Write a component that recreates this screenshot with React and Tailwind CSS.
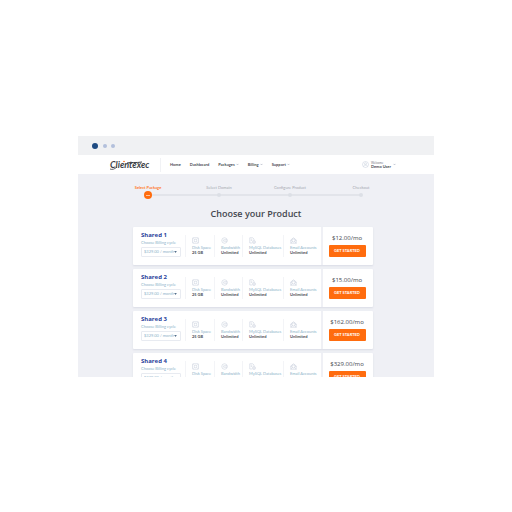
import { ChevronDown } from "lucide-react";

const links = [
  { label: "Home" },
  { label: "Dashboard" },
  { label: "Packages", menu: true },
  { label: "Billing", menu: true },
  { label: "Support", menu: true },
];

const steps = ["Select Package", "Select Domain", "Configure Product", "Checkout"];

const products = [
  { name: "Shared 1", price: "$12.00/mo" },
  { name: "Shared 2", price: "$15.00/mo" },
  { name: "Shared 3", price: "$162.00/mo" },
  { name: "Shared 4", price: "$329.00/mo" },
];

const features = [
  { icon: "disk", label: "Disk Space", value: "25 GB" },
  { icon: "gauge", label: "Bandwidth", value: "Unlimited" },
  { icon: "database", label: "MySQL Databases", value: "Unlimited" },
  { icon: "mail", label: "Email Accounts", value: "Unlimited" },
];

const FeatureIcon = ({ name }) => (
  <svg viewBox="0 0 28 28" className="h-[7px] w-[7px]" fill="none" stroke="#c3cad9" strokeWidth="2">
    {name === "disk" && (
      <>
        <rect x="2" y="3" width="24" height="22" rx="2" />
        <circle cx="14" cy="14" r="5" />
        <path d="M5 6l5 4M23 6l-5 4M5 22l5-4M23 22l-5-4" />
      </>
    )}
    {name === "gauge" && (
      <>
        <circle cx="14" cy="14" r="11" />
        <path d="M12 11h13M12 17h13M12 11a3 3 0 1 0 0 6" />
      </>
    )}
    {name === "database" && (
      <>
        <path d="M13 24H3V3h12l5 5v5M7 9h6M7 14h6" />
        <circle cx="20" cy="20" r="6" />
        <circle cx="20" cy="20" r="2" />
      </>
    )}
    {name === "mail" && (
      <>
        <path d="M3 12v13h22V12L14 3z" />
        <path d="M3 13l11 7 11-7M8 15V8h12v7M3 25l8-7M25 25l-8-7" />
      </>
    )}
  </svg>
);

const Logo = () => (
  <a href="#" className="relative block w-10 text-[9px] leading-[12px] font-bold italic text-[#3c3f46]">
    Clientexec
    <svg viewBox="0 0 40 12" className="absolute inset-0 h-3 w-10" fill="none">
      <path d="M17 4c4-1 9 0 15-1" stroke="#3c3f46" strokeWidth="1" />
      <path d="M0 10c2 1 5 0 7-2" stroke="#3c3f46" strokeWidth="0.8" />
      <circle cx="14" cy="2.5" r="0.8" fill="#ff6c0e" />
    </svg>
  </a>
);

const Header = () => (
  <header className="flex h-[19px] items-center bg-white pr-[38px] pl-8">
    <Logo />
    <nav className="ml-[10px] flex items-center gap-[9px] border-l border-[#f1f2f5] py-1 pl-[9px] text-[4px] leading-[6px] font-bold text-[#4a4d55]">
      {links.map((link) => (
        <a key={link.label} href="#" className="flex items-center gap-px">
          {link.label}
          {link.menu && <ChevronDown strokeWidth={4} className="h-[3px] w-[3px] text-[#8b94a8]" />}
        </a>
      ))}
    </nav>
    <button className="ml-auto flex items-center gap-[2px] text-left">
      <svg viewBox="0 0 28 28" className="h-[7px] w-[7px]" fill="none" stroke="#c3cad9" strokeWidth="2">
        <circle cx="14" cy="14" r="12" />
        <circle cx="14" cy="11" r="4" />
        <path d="M6 22c2-8 14-8 16 0" />
      </svg>
      <span className="block text-[#4a4d55]">
        <span className="block text-[3px] leading-[4px] text-[#777b85]">Welcome</span>
        <span className="block text-[4px] leading-[4px] font-bold">Demo User</span>
      </span>
      <ChevronDown strokeWidth={4} className="h-[3px] w-[3px] text-[#8b94a8]" />
    </button>
  </header>
);

const Stepper = () => (
  <div className="pr-3 pl-[15px]">
    <ol className="flex justify-between text-[4px] leading-[6px] text-[#a5a8b1]">
      {steps.map((step, i) => (
        <li key={step} className="flex w-0 justify-center whitespace-nowrap">
          <span className={i === 0 ? "font-bold text-[#ff7d2b]" : ""}>{step}</span>
        </li>
      ))}
    </ol>
    <div className="mt-[3px] flex h-[2px] items-center justify-between bg-[#e2e4ea]">
      {steps.map((step, i) => (
        <span key={step} className="flex w-0 justify-center">
          {i === 0 ? (
            <span className="flex h-2 w-2 shrink-0 items-center justify-center rounded-full bg-[#ff6c0e]">
              <span className="h-px w-1 bg-[#ffc39c]" />
            </span>
          ) : (
            <span className="h-1 w-1 shrink-0 rounded-full bg-[#dcdfe6]" />
          )}
        </span>
      ))}
    </div>
  </div>
);

const ProductCard = ({ product }) => {
  const id = product.name.toLowerCase().replace(" ", "-");

  return (
    <article className="grid h-[38px] grid-cols-[52fr_29fr_28fr_41fr_38fr_52fr] rounded-[1px] bg-white whitespace-nowrap shadow-[0_1px_2px_#d9dce5]">
      <div className="min-w-0 pt-1 pl-2">
        <h2 className="font-['Open_Sans',sans-serif] text-[6px] leading-[8px] font-bold text-[#2a3f9b]">{product.name}</h2>
        <label htmlFor={id} className="block text-[4px] leading-[7px] text-[#8db3c9]">
          Choose Billing cycle
        </label>
        <div className="mt-px flex h-[10px] w-10 items-center rounded-[1px] border border-[#e8ebf1] pr-[3px] pl-[2px]">
          <select id={id} className="min-w-0 flex-1 appearance-none bg-transparent text-[4px] leading-[6px] text-[#8db3c9] outline-none">
            <option>$329.00 / month</option>
          </select>
          <svg viewBox="0 0 4 3" className="h-[2px] w-[3px] shrink-0" fill="#55708c">
            <path d="M0 0h4L2 3z" />
          </svg>
        </div>
      </div>
      {features.map((feature) => (
        <div key={feature.label} className="my-2 min-w-0 border-l border-[#f3f4f7] pt-[2px] pl-[6px] text-[4px] leading-[5px]">
          <FeatureIcon name={feature.icon} />
          <p className="mt-px text-[#8db3c9]">{feature.label}</p>
          <p className="font-bold text-[#4a4d55]">{feature.value}</p>
        </div>
      ))}
      <div className="flex min-w-0 flex-col items-center border-l-2 border-[#eff0f5] pt-[7px] pr-[2px]">
        <p className="font-['Open_Sans',sans-serif] text-[6px] leading-[8px] text-[#44474f]">{product.price}</p>
        <button className="mt-[3px] h-3 w-[37px] rounded-[1px] bg-[#ff6c0e] text-[4px] leading-[4px] font-bold text-white">
          GET STARTED
        </button>
      </div>
    </article>
  );
};

const App = () => {
  return (
    <div className="min-h-screen bg-white px-[78px] pt-[136px] font-['Lato','Open_Sans',sans-serif]">
      <div className="aspect-[356/241] w-full overflow-hidden bg-[#eff0f5]">
        <div className="flex h-[19px] items-center gap-1 bg-[#f0f1f3] pl-[14px]">
          <span className="mr-px h-[6px] w-[6px] rounded-full bg-[#1e4b82]" />
          <span className="h-1 w-1 rounded-full bg-[#b3c0dc]" />
          <span className="h-1 w-1 rounded-full bg-[#b3c0dc]" />
        </div>
        <Header />
        <main className="pt-[11px]">
          <div className="pr-[61px] pl-[55px]">
            <Stepper />
          </div>
          <h1 className="mt-3 text-center font-['Open_Sans',sans-serif] text-[9px] leading-[12px] font-semibold text-[#44474f]">
            Choose your Product
          </h1>
          <div className="mt-[7px] flex flex-col gap-1 pr-[61px] pl-[55px]">
            {products.map((product) => (
              <ProductCard key={product.name} product={product} />
            ))}
          </div>
        </main>
      </div>
    </div>
  );
};

export default App;
